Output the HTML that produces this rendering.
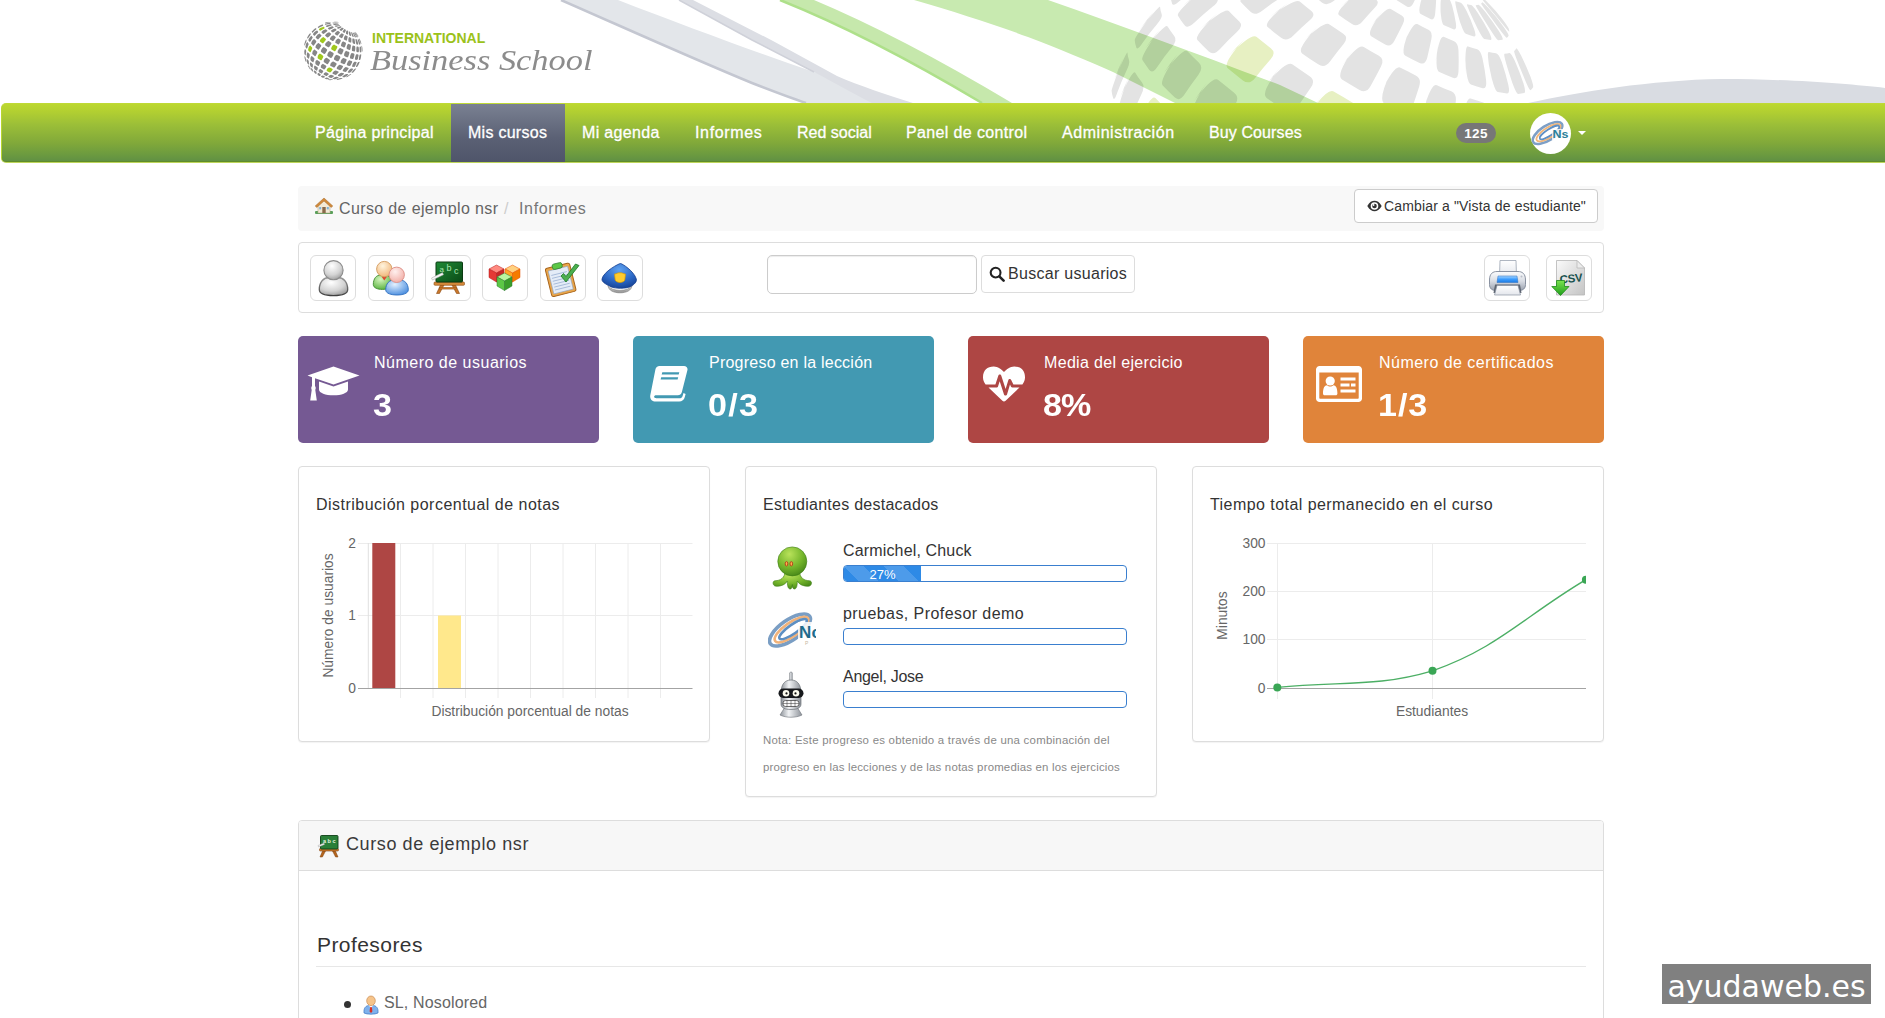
<!DOCTYPE html>
<html lang="es">
<head>
<meta charset="utf-8">
<title>Informes - Curso de ejemplo nsr</title>
<style>
*{box-sizing:border-box}
html,body{margin:0;padding:0}
body{width:1885px;height:1018px;overflow:hidden;background:#fff;position:relative;font-family:"Liberation Sans",sans-serif;font-size:16px;color:#333;letter-spacing:.4px}
.abs{position:absolute}
#hdr{left:0;top:0;width:1885px;height:103px;overflow:hidden}
#logo-int{left:372px;top:30px;font:bold 14px "Liberation Sans",sans-serif;color:#9bc21a;letter-spacing:0;line-height:16px;white-space:nowrap}
#logo-bs{left:370px;top:42px;font:italic 30px "Liberation Serif",serif;color:#8c8c8c;transform:scaleX(1.146);transform-origin:0 0;letter-spacing:0;line-height:36px;white-space:nowrap}
#nav{left:1px;top:103px;width:1890px;height:60px;border-radius:5px 0 0 5px;background:linear-gradient(#bcd82f 0%,#b3d031 12%,#9cbf38 35%,#80a83a 68%,#6e9c3f 85%,#5f8f44 100%);border:1px solid #b9d532;border-top-color:#bfd936;border-bottom-color:#bdd55a;box-shadow:inset 0 -1px 0 #5f8c2a}
.ni{position:absolute;top:0px;height:58px;line-height:57px;color:#fff;font-size:16px;white-space:nowrap;text-shadow:0 1px 0 rgba(0,0,0,.08);-webkit-text-stroke:.3px #fff}
#act{left:449px;top:0px;width:114px;height:58px;background:linear-gradient(#7a8192,#5a6074 60%,#4f556a)}
#badge{left:1456px;top:123px;width:40px;height:20px;border-radius:10px;background:#777;color:#fff;font-weight:bold;font-size:13.5px;line-height:21px;text-align:center;letter-spacing:.3px}
#avatar{left:1530px;top:113px;width:41px;height:41px;border-radius:50%;background:#fff;overflow:hidden}
#caret{left:1578px;top:131px;width:0;height:0;border-left:4.5px solid transparent;border-right:4.5px solid transparent;border-top:4.5px solid #fff}
#bc{left:298px;top:186px;width:1306px;height:45px;background:#f8f8f8;border-radius:4px}
#bc span{position:absolute;top:0;line-height:45px;white-space:nowrap}
#vbtn{left:1354px;top:189px;width:244px;height:34px;border:1px solid #ccc;border-radius:4px;background:#fff;font-size:14px;line-height:32px;color:#333;white-space:nowrap;letter-spacing:.1px}
#tb{left:298px;top:242px;width:1306px;height:71px;border:1px solid #ddd;border-radius:4px;background:#fff}
.ib{position:absolute;top:255px;width:46px;height:46px;border:1px solid #ddd;border-radius:6px;background:#fff}
.ib svg{position:absolute;left:0;top:0}
#sin{left:767px;top:255px;width:210px;height:39px;border:1px solid #ccc;border-radius:5px;background:#fff;box-shadow:inset 0 1px 1px rgba(0,0,0,.075)}
#sbtn{left:981px;top:255px;width:154px;height:38px;border:1px solid #ddd;border-radius:4px;background:#fff;line-height:36px;white-space:nowrap;letter-spacing:.3px}
.card{position:absolute;top:336px;width:301px;height:107px;border-radius:5px;color:#fff}
.card .t{position:absolute;left:76px;top:15px;font-size:16px;line-height:24px;white-space:nowrap;letter-spacing:.45px}
.card .v{position:absolute;left:75px;top:49.5px;font-size:31px;font-weight:bold;line-height:40px;white-space:nowrap;letter-spacing:1.2px;transform:scaleX(1.1);transform-origin:0 0}
.card svg{position:absolute}
.pan{position:absolute;border:1px solid #ddd;border-radius:4px;background:#fff;box-shadow:0 1px 1px rgba(0,0,0,.05)}
.pt{position:absolute;left:17px;top:26px;font-size:16px;line-height:24px;color:#333;white-space:nowrap;letter-spacing:.47px}
.pan svg{position:absolute;left:0;top:0}
svg text{font-family:"Liberation Sans",sans-serif;letter-spacing:0}
.sn{position:absolute;left:97px;font-size:16px;line-height:22px;color:#333;white-space:nowrap}
.pb{position:absolute;left:97px;width:284px;height:17px;border:1.5px solid #3a7fcf;border-radius:4px;background:#fff;overflow:hidden}
.pbf{position:absolute;left:0;top:0;height:100%;width:27.3%;background-color:#2e8ae6;background-image:linear-gradient(45deg,rgba(255,255,255,.15) 25%,transparent 25%,transparent 50%,rgba(255,255,255,.15) 50%,rgba(255,255,255,.15) 75%,transparent 75%,transparent);background-size:40px 40px;color:#fff;font-size:13px;line-height:17px;text-align:center;letter-spacing:0}
#note{position:absolute;left:17px;top:260px;font-size:11.43px;line-height:27.2px;color:#888;white-space:nowrap;letter-spacing:.45px}
#bp{left:298px;top:820px;width:1306px;height:230px;border:1px solid #ddd;border-radius:4px;background:#fff}
#bph{position:absolute;left:0;top:0;width:100%;height:50px;background:#f7f7f7;border-bottom:1px solid #ddd;border-radius:3px 3px 0 0}
#wm{left:1662px;top:964px;width:209px;height:40px;background:#808080;color:#fff;font:30px "DejaVu Sans",sans-serif;line-height:45px;overflow:hidden;text-align:center;letter-spacing:0;white-space:nowrap}
.f1{letter-spacing:0.311px!important}
.f2{letter-spacing:0.273px!important}
.f3{letter-spacing:0.344px!important}
.f4{letter-spacing:0.643px!important}
.f5{letter-spacing:0.003px!important}
.f6{letter-spacing:0.364px!important}
.f7{letter-spacing:0.546px!important}
.f8{letter-spacing:0.106px!important}
.f9{letter-spacing:0.365px!important}
.f10{letter-spacing:0.643px!important}
.f11{letter-spacing:0.153px!important}
.f12{letter-spacing:0.290px!important}
.f13{letter-spacing:0.500px!important}
.f14{letter-spacing:-0.975px!important}
.f15{letter-spacing:0.231px!important}
.f16{letter-spacing:1.193px!important}
.f17{letter-spacing:0.333px!important}
.f18{letter-spacing:-0.897px!important}
.f19{letter-spacing:0.474px!important}
.f20{letter-spacing:0.860px!important}
.f21{letter-spacing:0.485px!important}
.f22{letter-spacing:0.258px!important}
.f23{letter-spacing:0.155px!important}
.f24{letter-spacing:0.429px!important}
.f25{letter-spacing:-0.295px!important}
.f26{letter-spacing:0.244px!important}
.f27{letter-spacing:0.189px!important}
.f28{letter-spacing:0.442px!important}
.f29{letter-spacing:0.595px!important}
.f30{letter-spacing:0.432px!important}
.f31{letter-spacing:0.140px!important}
</style>
</head>
<body>
<div id="hdr" class="abs">
<svg class="abs" style="left:0;top:0" width="1885" height="103" viewBox="0 0 1885 103">
<defs>
<clipPath id="hc"><rect x="0" y="0" width="1885" height="103"/></clipPath>
<linearGradient id="fadeL" x1="0" x2="1" y1="0" y2="0"><stop offset="0" stop-color="#fff" stop-opacity="1"/><stop offset="1" stop-color="#fff" stop-opacity="0"/></linearGradient>
</defs>
<g clip-path="url(#hc)">
<!-- big globe tiles -->
<g id="bigglobe">
<path d="M1111.6,90.8L1112.1,94.3L1113.2,98.1Q1114.4,101.3 1117.2,92.7L1121.4,82.0L1126.1,71.5Q1130.2,63.4 1129.0,60.1L1127.9,56.2L1127.4,52.6Q1127.3,50.0 1114.4,79.6L1118.5,68.8L1123.2,58.2Q1111.6,88.2 1111.6,90.8Z" fill="#e3e3e3"/>
<path d="M1119.2,110.2L1122.3,115.0L1125.9,120.0Q1129.2,124.0 1132.1,115.7L1136.4,105.2L1141.2,94.8Q1145.3,86.7 1142.0,82.6L1138.3,77.5L1135.1,72.6Q1132.9,68.9 1119.9,98.2L1124.1,87.5L1128.8,77.0Q1117.1,106.7 1119.2,110.2Z" fill="#e3e3e3"/>
<path d="M1139.0,135.1L1144.5,140.8L1150.5,146.6Q1155.6,151.3 1158.7,143.2L1163.2,132.9L1168.2,122.7Q1172.4,114.7 1167.3,109.9L1161.1,103.9L1155.4,98.1Q1151.3,93.6 1138.0,122.5L1142.3,112.0L1147.1,101.7Q1135.0,130.8 1139.0,135.1Z" fill="#e7f0c2"/>
<path d="M1134.7,40.0L1135.2,43.6L1136.3,47.5Q1137.5,50.8 1142.5,43.1L1149.4,33.6L1156.8,24.4Q1162.9,17.5 1161.7,14.3L1160.6,10.5L1160.1,7.0Q1160.1,4.4 1139.7,29.7L1146.6,20.3L1154.0,11.3Q1134.6,37.4 1134.7,40.0Z" fill="#e3e3e3"/>
<path d="M1142.4,60.0L1145.6,64.8L1149.3,70.0Q1152.7,74.1 1157.6,66.4L1164.4,56.7L1171.7,47.4Q1177.7,40.2 1174.4,36.2L1170.8,31.2L1167.6,26.4Q1165.6,22.9 1145.2,48.6L1152.1,39.1L1159.4,29.9Q1140.2,56.3 1142.4,60.0Z" fill="#e3e3e3"/>
<path d="M1162.7,85.5L1168.4,91.3L1174.6,97.3Q1179.7,102.1 1184.6,94.3L1191.3,84.5L1198.3,74.9Q1204.0,67.5 1199.0,62.8L1193.0,57.0L1187.5,51.3Q1183.5,47.0 1163.6,73.3L1170.3,63.6L1177.5,54.2Q1158.6,81.0 1162.7,85.5Z" fill="#e3e3e3"/>
<path d="M1194.3,114.8L1202.1,121.2L1210.2,127.6Q1216.9,132.7 1221.7,124.8L1228.1,114.8L1234.8,105.0Q1240.2,97.3 1233.8,92.4L1225.8,86.1L1218.3,79.9Q1212.6,75.1 1193.4,102.0L1200.0,92.2L1206.9,82.5Q1188.5,109.8 1194.3,114.8Z" fill="#e3e3e3"/>
<path d="M1235.0,145.9L1244.3,152.4L1253.9,158.9Q1261.6,163.9 1266.3,156.0L1272.5,145.8L1278.8,135.7Q1283.8,127.7 1276.3,122.8L1267.0,116.5L1257.9,110.2Q1251.0,105.3 1232.7,132.9L1239.0,122.9L1245.6,113.0Q1227.9,140.8 1235.0,145.9Z" fill="#e3e3e3"/>
<path d="M1170.6,-3.4L1171.1,0.0L1172.1,3.8Q1173.3,6.9 1180.2,0.6L1189.3,-7.1L1198.9,-14.2Q1206.6,-19.5 1205.5,-22.4L1204.5,-25.8L1204.1,-29.0Q1204.1,-31.3 1177.5,-12.0L1186.7,-19.4L1196.3,-26.3Q1170.6,-5.9 1170.6,-3.4Z" fill="#e3e3e3"/>
<path d="M1178.0,15.7L1181.0,20.4L1184.6,25.2Q1187.8,29.2 1194.5,22.6L1203.3,14.5L1212.5,6.8Q1220.0,1.1 1217.0,-2.6L1213.7,-7.1L1210.9,-11.4Q1209.0,-14.7 1182.8,5.8L1191.8,-1.9L1201.3,-9.2Q1175.9,12.2 1178.0,15.7Z" fill="#e3e3e3"/>
<path d="M1197.4,40.1L1202.9,45.7L1208.8,51.4Q1213.7,56.0 1220.0,49.0L1228.3,40.3L1236.9,32.0Q1243.8,25.7 1239.3,21.5L1233.9,16.2L1228.8,11.1Q1225.2,7.2 1200.1,29.1L1208.8,20.9L1217.9,13.0Q1193.5,35.8 1197.4,40.1Z" fill="#e3e3e3"/>
<path d="M1227.7,68.2L1235.1,74.2L1242.9,80.4Q1249.3,85.3 1255.1,77.9L1262.7,68.6L1270.4,59.6Q1276.6,52.8 1270.8,48.3L1263.6,42.6L1256.7,37.0Q1251.6,32.6 1228.3,56.3L1236.4,47.5L1244.8,39.0Q1222.1,63.4 1227.7,68.2Z" fill="#e7f0c2"/>
<path d="M1266.6,97.9L1275.5,104.2L1284.7,110.3Q1292.0,115.1 1297.3,107.3L1304.0,97.5L1310.7,87.8Q1316.1,80.3 1309.3,75.9L1300.9,70.2L1292.6,64.5Q1286.4,60.0 1265.5,85.6L1272.8,76.2L1280.4,67.0Q1259.8,93.1 1266.6,97.9Z" fill="#e3e3e3"/>
<path d="M1311.6,127.5L1321.4,133.3L1331.3,139.1Q1339.1,143.6 1343.7,135.4L1349.4,124.9L1355.1,114.6Q1359.5,106.5 1352.3,102.4L1343.2,97.1L1334.1,91.7Q1327.1,87.3 1309.0,114.8L1315.5,104.8L1322.0,95.0Q1304.0,122.8 1311.6,127.5Z" fill="#e7f0c2"/>
<path d="M1223.5,-19.6L1226.2,-15.4L1229.4,-11.1Q1232.2,-7.6 1240.2,-12.6L1250.4,-18.6L1260.9,-24.1Q1269.3,-28.1 1266.9,-31.1L1264.2,-34.9L1261.8,-38.4Q1260.3,-41.1 1229.9,-27.3L1240.6,-32.7L1251.5,-37.6Q1221.7,-22.7 1223.5,-19.6Z" fill="#e7f0c2"/>
<path d="M1240.8,2.1L1245.6,7.0L1250.8,12.1Q1255.2,16.1 1262.5,10.4L1271.9,3.6L1281.5,-2.9Q1289.1,-7.7 1285.3,-11.2L1280.8,-15.5L1276.7,-19.8Q1273.7,-23.1 1245.1,-6.9L1255.2,-13.1L1265.5,-18.9Q1237.3,-1.7 1240.8,2.1Z" fill="#e3e3e3"/>
<path d="M1267.6,26.9L1274.2,32.4L1281.1,37.8Q1286.7,42.1 1293.1,35.7L1301.4,27.8L1309.7,20.3Q1316.2,14.7 1311.4,11.0L1305.5,6.3L1299.8,1.6Q1295.5,-2.0 1269.7,16.9L1278.9,9.7L1288.2,3.0Q1262.7,22.7 1267.6,26.9Z" fill="#e3e3e3"/>
<path d="M1302.1,53.4L1310.0,58.9L1318.2,64.3Q1324.7,68.6 1330.0,61.5L1336.8,52.6L1343.6,44.0Q1348.9,37.5 1343.3,33.8L1336.3,29.1L1329.5,24.4Q1324.3,20.6 1302.2,42.4L1310.1,34.3L1318.0,26.5Q1296.1,49.0 1302.1,53.4Z" fill="#e3e3e3"/>
<path d="M1342.0,79.5L1350.7,84.8L1359.5,89.9Q1366.4,93.8 1370.6,86.0L1375.9,76.2L1381.0,66.6Q1384.9,59.2 1378.9,55.8L1371.3,51.4L1363.8,46.9Q1358.0,43.3 1340.3,68.0L1346.8,58.9L1353.1,50.1Q1335.3,75.4 1342.0,79.5Z" fill="#e3e3e3"/>
<path d="M1384.5,103.7L1393.4,108.3L1402.3,112.7Q1409.2,116.0 1412.2,107.6L1415.8,96.9L1419.2,86.4Q1421.7,78.3 1415.7,75.4L1408.1,71.6L1400.5,67.7Q1394.4,64.5 1381.5,91.9L1386.3,81.9L1390.9,72.1Q1377.6,99.9 1384.5,103.7Z" fill="#e3e3e3"/>
<path d="M1426.8,124.1L1435.3,127.7L1443.6,131.2Q1450.0,133.7 1451.9,124.7L1454.0,113.4L1455.7,102.2Q1456.8,93.5 1451.3,91.3L1444.1,88.4L1436.9,85.3Q1431.1,82.7 1422.8,112.5L1426.0,101.7L1429.0,91.0Q1420.1,121.1 1426.8,124.1Z" fill="#e3e3e3"/>
<path d="M1466.0,139.5L1473.4,141.9L1480.6,144.1Q1486.1,145.6 1487.0,136.3L1487.7,124.6L1488.0,112.9Q1487.9,103.8 1483.2,102.5L1477.0,100.6L1470.6,98.5Q1465.4,96.7 1461.6,128.3L1463.3,116.9L1464.6,105.5Q1459.9,137.4 1466.0,139.5Z" fill="#e3e3e3"/>
<path d="M1499.3,148.7L1505.3,149.8L1510.9,150.6Q1515.0,151.0 1515.1,141.6L1514.8,129.6L1513.9,117.7Q1512.8,108.4 1509.2,108.1L1504.4,107.4L1499.3,106.5Q1495.0,105.6 1495.1,138.3L1495.5,126.5L1495.4,114.7Q1494.4,147.7 1499.3,148.7Z" fill="#e3e3e3"/>
<path d="M1524.6,151.2L1528.6,150.8L1532.2,150.2Q1534.8,149.5 1534.4,140.1L1533.3,128.2L1531.6,116.4Q1529.8,107.1 1527.6,107.7L1524.5,108.3L1521.0,108.6Q1518.0,108.7 1521.0,141.8L1520.5,129.9L1519.3,118.0Q1521.1,151.3 1524.6,151.2Z" fill="#e3e3e3"/>
<path d="M1540.0,146.8L1541.9,145.0L1543.3,142.9Q1544.1,141.1 1543.4,132.0L1542.0,120.4L1539.9,108.9Q1537.8,99.9 1537.1,101.5L1535.9,103.3L1534.3,104.8Q1532.8,105.8 1537.7,138.6L1536.5,126.8L1534.7,115.0Q1538.2,147.9 1540.0,146.8Z" fill="#e3e3e3"/>
<path d="M1311.4,-6.0L1316.7,-1.7L1322.2,2.7Q1326.7,6.2 1333.3,1.2L1341.6,-4.8L1349.9,-10.3Q1356.4,-14.3 1352.9,-17.0L1348.6,-20.4L1344.5,-23.7Q1341.4,-26.4 1314.9,-13.7L1324.4,-18.7L1333.9,-23.2Q1307.4,-9.4 1311.4,-6.0Z" fill="#e3e3e3"/>
<path d="M1339.1,15.2L1345.5,19.7L1352.0,24.1Q1357.2,27.5 1362.4,21.5L1368.8,14.2L1375.2,7.3Q1380.0,2.2 1376.0,-0.4L1370.9,-3.8L1366.0,-7.3Q1362.2,-10.0 1340.5,6.5L1348.3,0.2L1356.1,-5.7Q1334.3,11.8 1339.1,15.2Z" fill="#e3e3e3"/>
<path d="M1371.2,36.3L1378.2,40.5L1385.2,44.6Q1390.8,47.8 1394.4,40.8L1398.8,32.3L1402.9,24.1Q1406.0,17.9 1401.7,15.5L1396.2,12.3L1390.8,9.0Q1386.6,6.4 1370.5,26.7L1376.4,19.1L1382.2,11.8Q1365.8,32.9 1371.2,36.3Z" fill="#e3e3e3"/>
<path d="M1405.4,55.7L1412.5,59.4L1419.6,62.9Q1425.2,65.6 1427.2,57.8L1429.4,48.2L1431.4,38.9Q1432.7,31.7 1428.4,29.7L1422.9,26.9L1417.3,24.1Q1413.0,21.7 1403.0,45.5L1406.8,36.7L1410.3,28.2Q1399.8,52.7 1405.4,55.7Z" fill="#e3e3e3"/>
<path d="M1439.4,72.1L1446.2,75.0L1452.9,77.8Q1458.0,79.8 1458.5,71.4L1458.7,60.9L1458.5,50.6Q1458.1,42.8 1454.1,41.2L1448.9,39.1L1443.7,36.8Q1439.5,34.9 1435.5,61.7L1437.3,51.9L1438.6,42.2Q1434.0,69.7 1439.4,72.1Z" fill="#e3e3e3"/>
<path d="M1470.9,84.5L1476.9,86.4L1482.7,88.2Q1487.0,89.4 1486.1,80.5L1484.6,69.4L1482.5,58.5Q1480.6,50.2 1477.2,49.2L1472.7,47.9L1468.1,46.4Q1464.3,45.1 1466.1,74.2L1465.8,63.5L1465.1,53.1Q1466.0,82.8 1470.9,84.5Z" fill="#e3e3e3"/>
<path d="M1497.7,91.9L1502.5,92.8L1507.0,93.4Q1510.3,93.7 1508.3,84.7L1505.3,73.3L1501.8,62.1Q1498.6,53.5 1496.0,53.3L1492.5,52.8L1488.8,52.1Q1485.8,51.5 1492.5,82.1L1490.5,70.9L1488.0,59.9Q1493.7,91.1 1497.7,91.9Z" fill="#e3e3e3"/>
<path d="M1518.0,93.9L1521.3,93.6L1524.2,93.1Q1526.2,92.5 1523.5,83.5L1519.5,72.2L1514.9,61.1Q1510.9,52.6 1509.4,53.0L1507.1,53.4L1504.6,53.7Q1502.4,53.7 1513.0,84.9L1509.7,73.5L1505.8,62.3Q1515.2,94.0 1518.0,93.9Z" fill="#e3e3e3"/>
<path d="M1530.4,90.3L1531.9,88.9L1533.1,87.3Q1533.7,85.8 1530.6,77.1L1526.1,66.2L1521.1,55.6Q1516.7,47.4 1516.2,48.5L1515.4,49.8L1514.2,50.9Q1513.1,51.6 1526.1,82.3L1522.0,71.1L1517.2,60.1Q1529.0,91.3 1530.4,90.3Z" fill="#e3e3e3"/>
<path d="M1375.1,-13.8L1379.5,-10.8L1384.0,-7.8Q1387.6,-5.4 1392.1,-9.8L1397.8,-15.0L1403.2,-19.8Q1407.3,-23.1 1405.1,-24.6L1402.3,-26.5L1399.6,-28.3Q1397.5,-29.8 1377.6,-19.8L1384.9,-23.8L1392.1,-27.4Q1371.7,-16.2 1375.1,-13.8Z" fill="#e3e3e3"/>
<path d="M1397.2,0.6L1402.0,3.5L1406.8,6.4Q1410.7,8.5 1413.4,3.0L1416.6,-3.7L1419.5,-9.9Q1421.6,-14.5 1419.3,-15.8L1416.2,-17.6L1413.3,-19.4Q1411.0,-20.8 1397.5,-6.4L1402.6,-12.0L1407.4,-17.1Q1393.4,-1.7 1397.2,0.6Z" fill="#e3e3e3"/>
<path d="M1420.7,14.0L1425.6,16.5L1430.5,19.0Q1434.3,20.8 1435.1,14.3L1435.8,6.3L1436.2,-1.3Q1436.3,-6.9 1433.9,-8.0L1430.9,-9.5L1427.8,-11.1Q1425.4,-12.4 1419.0,6.1L1421.6,-0.9L1423.9,-7.5Q1416.8,11.9 1420.7,14.0Z" fill="#e3e3e3"/>
<path d="M1444.1,25.3L1448.8,27.3L1453.4,29.2Q1456.9,30.6 1455.9,23.3L1454.2,14.3L1452.1,5.6Q1450.3,-0.8 1448.1,-1.7L1445.2,-2.9L1442.3,-4.1Q1440.0,-5.1 1440.7,16.9L1440.7,8.6L1440.5,0.7Q1440.4,23.6 1444.1,25.3Z" fill="#e3e3e3"/>
<path d="M1465.8,33.8L1469.9,35.2L1473.9,36.4Q1476.9,37.2 1474.2,29.3L1470.5,19.6L1466.2,10.3Q1462.6,3.3 1460.8,2.7L1458.3,2.0L1455.7,1.2Q1453.7,0.4 1460.9,25.1L1458.7,15.9L1456.0,7.1Q1462.4,32.6 1465.8,33.8Z" fill="#e3e3e3"/>
<path d="M1484.2,38.9L1487.5,39.5L1490.6,40.0Q1492.9,40.2 1489.0,32.1L1483.5,22.1L1477.5,12.4Q1472.5,5.1 1471.1,5.0L1469.2,4.7L1467.2,4.3Q1465.5,4.0 1478.5,30.4L1474.2,20.6L1469.5,11.1Q1481.5,38.3 1484.2,38.9Z" fill="#e3e3e3"/>
<path d="M1498.2,40.3L1500.5,40.1L1502.5,39.7Q1503.9,39.3 1499.0,31.3L1492.4,21.4L1485.2,11.8Q1479.3,4.6 1478.4,4.8L1477.2,5.0L1475.8,5.2Q1474.6,5.2 1492.0,32.2L1486.2,22.2L1479.9,12.5Q1496.3,40.3 1498.2,40.3Z" fill="#e3e3e3"/>
<path d="M1506.8,37.8L1507.8,36.9L1508.6,35.7Q1509.0,34.7 1503.7,27.1L1496.6,17.6L1488.9,8.6Q1482.5,1.7 1482.2,2.3L1481.8,3.0L1481.1,3.6Q1480.5,4.1 1500.8,30.5L1493.9,20.7L1486.6,11.2Q1505.8,38.5 1506.8,37.8Z" fill="#e3e3e3"/>
<path d="M1509.3,31.7L1509.1,30.0L1508.6,28.2Q1508.0,26.7 1502.8,19.7L1495.7,11.1L1488.2,2.9Q1481.9,-3.3 1482.2,-2.3L1482.5,-1.2L1482.7,-0.1Q1482.7,0.6 1504.0,25.4L1496.8,16.2L1489.1,7.3Q1509.3,33.0 1509.3,31.7Z" fill="#e3e3e3"/>
</g>
<!-- gray hill right -->
<path d="M1528,103 C1580,92 1650,80 1722,79 C1790,79 1850,84 1885,88 L1885,103 Z" fill="#d9dce2"/>
<!-- gray bands -->
<path d="M561,0 C625,28 689,57 752,83 C770,90 788,97 805,103 L911,103 C893,98 875,93 858,87 L814,72 C750,50 688,27 618,0 Z" fill="#e3e6ea"/>
<path d="M561,0 C625,28 689,57 752,83 C770,90 788,97 806,103" fill="none" stroke="#c4c7d1" stroke-width="2.5"/>
<path d="M679,0 L752,40 L814,72 C835,83 850,92 872,103 L913,103 C885,94 860,86 837,76 L773,41 L693,0 Z" fill="#dcdee4"/>
<path d="M679,0 L752,40 L814,72" fill="none" stroke="#cfd1d9" stroke-width="1.5"/>
<!-- thin green band -->
<path d="M780,0 Q870,36 982,103 L1012,103 Q900,36 814,0 Z" fill="#c6e8ac"/>
<path d="M780,0 Q870,36 982,103" fill="none" stroke="#aee08a" stroke-width="2.5"/>
<!-- wide green band -->
<path d="M914,0 C955,12 990,23 1028,37 C1060,49 1088,61 1113,72 L1175,103 L1318,103 L1280,85 C1200,55 1120,25 1048,0 Z" fill="#c8eab0" style="mix-blend-mode:multiply"/>
</g>
</svg>
<svg class="abs" style="left:300px;top:18px" width="66" height="66" viewBox="300 18 66 66">
<path d="M309.7,68.9L310.1,69.3L310.5,69.7Q310.8,70.0 310.4,69.3L310.0,68.3L309.6,67.3Q309.4,66.5 308.9,66.1L308.4,65.6L307.9,65.1Q307.5,64.7 308.9,67.8L308.3,66.7L307.8,65.6Q309.4,68.6 309.7,68.9Z" fill="#868686"/>
<path d="M311.9,70.9L312.4,71.3L312.9,71.8Q313.4,72.1 313.2,71.5L313.0,70.8L312.8,69.9Q312.7,69.2 312.2,68.8L311.4,68.2L310.8,67.7Q310.2,67.2 311.1,69.9L310.7,69.0L310.4,68.0Q311.5,70.6 311.9,70.9Z" fill="#868686"/>
<path d="M314.6,73.0L315.3,73.4L315.9,73.9Q316.4,74.2 316.4,73.8L316.5,73.2L316.6,72.5Q316.7,72.0 316.1,71.5L315.2,71.0L314.4,70.4Q313.8,70.0 314.0,72.1L313.9,71.4L313.8,70.6Q314.2,72.7 314.6,73.0Z" fill="#868686"/>
<path d="M317.8,75.1L318.5,75.5L319.2,75.9Q319.8,76.2 320.0,75.9L320.4,75.5L320.8,75.0Q321.1,74.6 320.4,74.2L319.5,73.6L318.6,73.1Q317.9,72.7 317.4,74.4L317.5,73.8L317.7,73.2Q317.3,74.8 317.8,75.1Z" fill="#868686"/>
<path d="M321.2,77.0L321.9,77.3L322.6,77.7Q323.1,77.9 323.6,77.8L324.3,77.5L325.0,77.1Q325.5,76.8 324.8,76.5L323.9,76.0L323.0,75.6Q322.3,75.2 321.0,76.4L321.4,76.1L321.9,75.6Q320.7,76.7 321.2,77.0Z" fill="#868686"/>
<path d="M324.6,78.6L325.2,78.8L325.9,79.1Q326.3,79.3 327.1,79.2L328.0,79.1L329.0,78.8Q329.7,78.6 329.1,78.4L328.2,78.0L327.4,77.7Q326.7,77.4 324.6,78.2L325.3,78.0L326.1,77.7Q324.0,78.3 324.6,78.6Z" fill="#868686"/>
<path d="M327.6,79.7L328.2,79.9L328.7,80.1Q329.2,80.2 330.1,80.2L331.3,80.1L332.5,80.0Q333.4,79.8 332.9,79.6L332.1,79.4L331.4,79.2Q330.8,79.0 327.9,79.5L329.0,79.4L330.0,79.2Q327.2,79.6 327.6,79.7Z" fill="#868686"/>
<path d="M305.4,61.0L305.7,61.5L306.1,62.0Q306.4,62.4 306.2,61.4L306.0,60.0L305.8,58.7Q305.7,57.6 305.4,57.2L304.9,56.6L304.5,56.1Q304.3,55.6 304.9,59.6L304.6,58.2L304.4,56.8Q305.2,60.7 305.4,61.0Z" fill="#868686"/>
<path d="M307.4,63.5L308.0,64.0L308.6,64.6Q309.1,65.1 309.0,64.2L308.9,63.0L308.8,61.8Q308.9,60.8 308.3,60.3L307.6,59.6L306.9,59.0Q306.5,58.5 306.8,62.1L306.6,60.8L306.5,59.5Q307.0,63.1 307.4,63.5Z" fill="#868686"/>
<path d="M310.5,66.3L311.3,66.9L312.1,67.5Q312.7,68.0 312.7,67.2L312.8,66.2L312.9,65.1Q313.1,64.2 312.3,63.7L311.4,62.9L310.6,62.2Q309.9,61.7 309.9,65.0L309.8,63.8L309.8,62.6Q310.0,65.8 310.5,66.3Z" fill="#868686"/>
<path d="M314.5,69.3L315.4,69.9L316.3,70.5Q317.0,70.9 317.2,70.3L317.5,69.4L317.8,68.5Q318.1,67.7 317.3,67.1L316.2,66.4L315.2,65.7Q314.4,65.2 313.9,68.0L314.0,67.0L314.2,66.0Q313.8,68.8 314.5,69.3Z" fill="#868686"/>
<path d="M319.0,72.2L320.0,72.7L320.9,73.3Q321.7,73.7 322.1,73.2L322.6,72.4L323.2,71.6Q323.6,71.0 322.7,70.5L321.6,69.8L320.4,69.1Q319.6,68.6 318.5,71.1L318.8,70.2L319.2,69.3Q318.2,71.7 319.0,72.2Z" fill="#868686"/>
<path d="M323.8,74.8L324.7,75.3L325.7,75.8Q326.5,76.2 327.1,75.7L327.8,75.1L328.6,74.4Q329.2,73.8 328.3,73.4L327.2,72.8L326.0,72.3Q325.1,71.8 323.4,73.9L324.0,73.2L324.6,72.4Q323.0,74.4 323.8,74.8Z" fill="#868686"/>
<path d="M328.5,77.1L329.4,77.5L330.3,77.8Q331.0,78.1 331.8,77.7L332.8,77.2L333.7,76.6Q334.5,76.1 333.7,75.8L332.6,75.3L331.6,74.9Q330.7,74.5 328.4,76.3L329.2,75.7L330.0,75.1Q327.7,76.8 328.5,77.1Z" fill="#868686"/>
<path d="M332.8,78.7L333.6,79.0L334.4,79.2Q335.0,79.4 335.9,79.1L337.1,78.6L338.3,78.0Q339.2,77.6 338.5,77.4L337.6,77.1L336.6,76.8Q335.9,76.6 333.0,78.2L334.0,77.7L335.0,77.1Q332.2,78.5 332.8,78.7Z" fill="#868686"/>
<path d="M336.5,79.7L337.1,79.8L337.7,79.9Q338.1,79.9 339.2,79.6L340.5,79.2L341.9,78.7Q342.9,78.2 342.4,78.1L341.7,78.1L340.9,77.9Q340.3,77.8 336.9,79.3L338.1,78.8L339.3,78.3Q335.9,79.6 336.5,79.7Z" fill="#868686"/>
<path d="M304.5,54.2L304.9,54.7L305.3,55.3Q305.7,55.8 305.8,54.7L305.9,53.3L306.2,51.9Q306.4,50.8 306.0,50.3L305.5,49.6L305.0,49.0Q304.7,48.5 304.2,52.6L304.3,51.1L304.5,49.7Q304.2,53.7 304.5,54.2Z" fill="#868686"/>
<path d="M307.0,57.2L307.7,57.9L308.4,58.6Q309.0,59.1 309.1,58.1L309.4,56.8L309.7,55.5Q310.0,54.4 309.3,53.8L308.5,53.0L307.8,52.3Q307.2,51.7 306.6,55.6L306.7,54.2L307.0,52.8Q306.5,56.7 307.0,57.2Z" fill="#868686"/>
<path d="M310.8,60.6L311.7,61.4L312.6,62.1Q313.4,62.7 313.6,61.8L314.0,60.5L314.4,59.3Q314.8,58.3 313.9,57.7L312.9,56.9L311.9,56.1Q311.1,55.4 310.2,59.1L310.5,57.8L310.8,56.5Q310.1,60.1 310.8,60.6Z" fill="#868686"/>
<path d="M315.6,64.3L316.7,65.0L317.8,65.7Q318.7,66.3 319.0,65.5L319.5,64.3L320.1,63.2Q320.5,62.3 319.5,61.6L318.3,60.8L317.1,60.0Q316.2,59.4 315.0,62.8L315.4,61.6L315.9,60.4Q314.8,63.7 315.6,64.3Z" fill="#868686"/>
<path d="M321.1,67.8L322.3,68.5L323.5,69.2Q324.4,69.7 324.9,69.0L325.6,67.9L326.2,66.9Q326.8,66.0 325.8,65.4L324.5,64.7L323.2,63.9Q322.2,63.3 320.6,66.4L321.1,65.3L321.7,64.2Q320.2,67.3 321.1,67.8Z" fill="#868686"/>
<path d="M326.9,71.1L328.1,71.7L329.3,72.3Q330.3,72.7 330.9,72.0L331.7,71.1L332.5,70.1Q333.2,69.3 332.1,68.8L330.8,68.1L329.5,67.5Q328.5,66.9 326.5,69.8L327.2,68.8L327.9,67.8Q326.0,70.6 326.9,71.1Z" fill="#a0c81e"/>
<path d="M332.7,73.8L333.8,74.3L335.0,74.8Q335.8,75.1 336.6,74.4L337.5,73.6L338.5,72.6Q339.2,71.8 338.3,71.5L337.1,71.0L335.8,70.5Q334.8,70.0 332.5,72.7L333.3,71.8L334.2,70.8Q331.8,73.4 332.7,73.8Z" fill="#868686"/>
<path d="M338.0,75.9L339.0,76.2L340.0,76.4Q340.7,76.6 341.6,76.0L342.6,75.2L343.7,74.3Q344.5,73.5 343.7,73.3L342.7,73.0L341.6,72.7Q340.7,72.4 338.0,75.0L339.0,74.1L340.0,73.2Q337.2,75.6 338.0,75.9Z" fill="#868686"/>
<path d="M342.5,77.0L343.3,77.2L344.0,77.2Q344.5,77.3 345.5,76.7L346.7,75.9L347.8,75.0Q348.7,74.2 348.1,74.2L347.3,74.1L346.5,74.0Q345.8,73.8 342.7,76.3L343.9,75.5L344.9,74.6Q341.8,76.9 342.5,77.0Z" fill="#868686"/>
<path d="M345.8,77.3L346.3,77.2L346.8,77.1Q347.1,77.0 348.1,76.4L349.4,75.6L350.6,74.7Q351.5,73.9 351.2,74.0L350.7,74.1L350.1,74.2Q349.6,74.2 346.4,76.7L347.6,75.9L348.7,75.0Q345.4,77.3 345.8,77.3Z" fill="#868686"/>
<path d="M304.3,44.5L304.4,44.9L304.6,45.4Q304.8,45.9 305.1,44.7L305.6,43.3L306.2,41.9Q306.7,40.8 306.5,40.4L306.3,39.8L306.2,39.4Q306.2,39.0 304.6,43.0L305.1,41.5L305.7,40.1Q304.3,44.1 304.3,44.5Z" fill="#868686"/>
<path d="M305.5,47.1L305.9,47.8L306.4,48.4Q306.9,49.0 307.3,47.9L307.8,46.5L308.4,45.1Q308.9,44.0 308.4,43.4L307.9,42.8L307.4,42.1Q307.1,41.6 305.5,45.5L306.0,44.1L306.6,42.7Q305.2,46.6 305.5,47.1Z" fill="#868686"/>
<path d="M308.3,50.5L309.0,51.2L309.9,52.0Q310.5,52.6 310.9,51.6L311.5,50.2L312.1,48.8Q312.6,47.8 311.9,47.2L311.1,46.4L310.3,45.6Q309.7,45.0 308.1,48.8L308.6,47.4L309.2,46.1Q307.7,49.9 308.3,50.5Z" fill="#a0c81e"/>
<path d="M312.5,54.3L313.5,55.1L314.6,56.0Q315.4,56.6 315.9,55.6L316.5,54.3L317.2,52.9Q317.7,51.9 316.8,51.2L315.7,50.4L314.7,49.5Q313.9,48.9 312.2,52.6L312.7,51.3L313.3,49.9Q311.7,53.7 312.5,54.3Z" fill="#868686"/>
<path d="M317.9,58.4L319.1,59.2L320.3,60.0Q321.3,60.6 321.8,59.7L322.5,58.4L323.2,57.1Q323.8,56.1 322.7,55.4L321.5,54.6L320.2,53.7Q319.3,53.0 317.4,56.7L318.0,55.4L318.7,54.1Q317.0,57.7 317.9,58.4Z" fill="#a0c81e"/>
<path d="M324.0,62.3L325.3,63.1L326.7,63.9Q327.7,64.5 328.3,63.5L329.0,62.3L329.8,61.0Q330.4,60.0 329.3,59.4L327.9,58.6L326.6,57.8Q325.5,57.2 323.5,60.7L324.2,59.5L324.9,58.2Q323.0,61.7 324.0,62.3Z" fill="#868686"/>
<path d="M330.5,66.0L331.9,66.6L333.2,67.3Q334.2,67.8 334.9,66.9L335.7,65.7L336.5,64.4Q337.1,63.4 336.0,62.9L334.7,62.3L333.3,61.6Q332.2,61.0 330.1,64.5L330.8,63.3L331.6,62.0Q329.5,65.4 330.5,66.0Z" fill="#868686"/>
<path d="M337.0,69.0L338.2,69.6L339.5,70.1Q340.4,70.4 341.1,69.5L342.0,68.4L342.8,67.1Q343.5,66.2 342.5,65.8L341.2,65.3L339.9,64.7Q338.9,64.3 336.6,67.7L337.4,66.5L338.2,65.3Q336.0,68.6 337.0,69.0Z" fill="#868686"/>
<path d="M342.9,71.3L344.0,71.6L345.0,71.9Q345.8,72.2 346.6,71.3L347.5,70.1L348.4,68.9Q349.1,67.9 348.2,67.7L347.1,67.4L346.0,67.0Q345.1,66.7 342.7,70.1L343.6,68.9L344.4,67.7Q342.0,71.0 342.9,71.3Z" fill="#868686"/>
<path d="M347.8,72.6L348.7,72.7L349.5,72.8Q350.1,72.9 350.9,72.0L351.9,70.9L352.8,69.7Q353.5,68.7 352.9,68.7L352.0,68.5L351.1,68.4Q350.4,68.3 347.9,71.6L348.8,70.4L349.7,69.2Q347.1,72.5 347.8,72.6Z" fill="#868686"/>
<path d="M351.6,72.9L352.1,72.8L352.7,72.7Q353.0,72.6 353.9,71.7L354.9,70.5L355.8,69.3Q356.5,68.4 356.1,68.5L355.6,68.6L355.0,68.7Q354.5,68.7 351.9,72.0L352.9,70.9L353.8,69.7Q351.1,72.9 351.6,72.9Z" fill="#868686"/>
<path d="M307.2,37.6L307.3,38.1L307.5,38.6Q307.7,39.0 308.3,38.0L309.1,36.7L310.1,35.5Q310.9,34.5 310.7,34.1L310.5,33.6L310.4,33.1Q310.4,32.7 307.8,36.2L308.6,34.9L309.6,33.7Q307.1,37.2 307.2,37.6Z" fill="#868686"/>
<path d="M308.4,40.3L308.8,41.0L309.4,41.7Q309.8,42.2 310.5,41.2L311.3,39.9L312.2,38.6Q313.0,37.7 312.5,37.1L312.0,36.4L311.6,35.8Q311.3,35.3 308.7,38.8L309.6,37.5L310.5,36.3Q308.1,39.8 308.4,40.3Z" fill="#868686"/>
<path d="M311.3,43.8L312.1,44.6L312.9,45.4Q313.6,46.0 314.2,45.0L315.1,43.7L316.0,42.4Q316.7,41.4 316.0,40.8L315.2,40.0L314.4,39.2Q313.8,38.6 311.3,42.2L312.2,40.9L313.1,39.6Q310.7,43.2 311.3,43.8Z" fill="#868686"/>
<path d="M315.6,47.8L316.7,48.6L317.8,49.5Q318.7,50.1 319.3,49.1L320.1,47.8L321.0,46.5Q321.7,45.4 320.8,44.8L319.7,43.9L318.7,43.1Q317.9,42.5 315.5,46.1L316.3,44.8L317.2,43.5Q314.9,47.1 315.6,47.8Z" fill="#868686"/>
<path d="M321.2,52.0L322.4,52.8L323.7,53.7Q324.7,54.3 325.4,53.3L326.2,51.9L327.0,50.6Q327.6,49.5 326.6,48.9L325.4,48.1L324.1,47.2Q323.2,46.5 320.9,50.2L321.7,48.9L322.5,47.6Q320.2,51.3 321.2,52.0Z" fill="#868686"/>
<path d="M327.6,56.1L328.9,56.9L330.3,57.7Q331.4,58.3 332.0,57.2L332.8,55.9L333.5,54.5Q334.1,53.4 333.1,52.8L331.7,52.0L330.4,51.2Q329.3,50.6 327.1,54.4L327.9,53.0L328.7,51.7Q326.5,55.4 327.6,56.1Z" fill="#868686"/>
<path d="M334.3,59.8L335.7,60.5L337.0,61.2Q338.1,61.7 338.7,60.7L339.5,59.3L340.2,57.9Q340.8,56.8 339.7,56.3L338.4,55.6L337.0,54.9Q335.9,54.4 333.8,58.2L334.6,56.8L335.3,55.5Q333.2,59.3 334.3,59.8Z" fill="#868686"/>
<path d="M340.9,63.0L342.3,63.5L343.5,64.1Q344.5,64.4 345.1,63.4L345.8,62.0L346.5,60.6Q347.0,59.5 346.1,59.1L344.8,58.6L343.5,58.0Q342.5,57.6 340.5,61.5L341.2,60.1L342.0,58.7Q339.9,62.5 340.9,63.0Z" fill="#868686"/>
<path d="M347.1,65.3L348.2,65.7L349.3,66.0Q350.1,66.2 350.7,65.2L351.4,63.8L352.1,62.4Q352.5,61.2 351.7,61.0L350.6,60.7L349.5,60.3Q348.6,60.0 346.7,64.0L347.4,62.6L348.1,61.2Q346.1,65.0 347.1,65.3Z" fill="#868686"/>
<path d="M352.2,66.7L353.1,66.8L354.0,66.9Q354.6,67.0 355.2,65.9L355.8,64.5L356.5,63.1Q356.9,62.0 356.3,61.9L355.5,61.8L354.6,61.7Q353.8,61.5 352.0,65.5L352.7,64.1L353.4,62.7Q351.5,66.5 352.2,66.7Z" fill="#868686"/>
<path d="M356.1,67.0L356.7,66.9L357.2,66.8Q357.6,66.6 358.1,65.6L358.8,64.2L359.4,62.8Q359.8,61.6 359.5,61.7L358.9,61.9L358.4,61.9Q357.8,62.0 356.1,65.9L356.8,64.5L357.4,63.1Q355.5,67.0 356.1,67.0Z" fill="#868686"/>
<path d="M311.8,31.6L311.9,32.1L312.1,32.6Q312.2,33.0 313.1,32.2L314.3,31.1L315.5,30.1Q316.5,29.4 316.3,29.0L316.2,28.5L316.1,28.1Q316.1,27.7 312.6,30.4L313.8,29.4L315.1,28.4Q311.8,31.2 311.8,31.6Z" fill="#868686"/>
<path d="M313.0,34.3L313.4,34.9L313.9,35.6Q314.4,36.1 315.2,35.2L316.3,34.1L317.5,33.0Q318.5,32.2 318.1,31.7L317.6,31.1L317.2,30.5Q316.9,30.1 313.5,32.9L314.7,31.8L315.9,30.8Q312.7,33.8 313.0,34.3Z" fill="#868686"/>
<path d="M315.7,37.6L316.5,38.4L317.3,39.1Q318.0,39.8 318.8,38.8L319.9,37.6L321.0,36.5Q321.9,35.6 321.2,35.1L320.5,34.4L319.8,33.7Q319.3,33.1 316.0,36.1L317.2,35.0L318.3,33.9Q315.2,37.0 315.7,37.6Z" fill="#868686"/>
<path d="M320.0,41.4L321.0,42.3L322.0,43.1Q322.9,43.7 323.6,42.7L324.6,41.5L325.6,40.3Q326.4,39.3 325.6,38.7L324.6,38.0L323.7,37.2Q323.0,36.6 320.0,39.9L321.0,38.7L322.1,37.5Q319.2,40.8 320.0,41.4Z" fill="#a0c81e"/>
<path d="M325.3,45.5L326.5,46.3L327.8,47.1Q328.8,47.8 329.4,46.7L330.3,45.4L331.2,44.1Q331.9,43.1 331.0,42.5L329.8,41.7L328.7,41.0Q327.8,40.4 325.1,43.8L326.1,42.6L327.0,41.3Q324.4,44.8 325.3,45.5Z" fill="#868686"/>
<path d="M331.5,49.5L332.8,50.2L334.1,51.0Q335.1,51.6 335.7,50.5L336.5,49.1L337.2,47.7Q337.8,46.6 336.9,46.1L335.6,45.4L334.4,44.7Q333.4,44.1 331.1,47.8L331.9,46.4L332.8,45.1Q330.4,48.8 331.5,49.5Z" fill="#a0c81e"/>
<path d="M338.0,53.1L339.3,53.8L340.6,54.4Q341.7,54.9 342.2,53.8L342.8,52.3L343.4,50.9Q343.9,49.7 342.9,49.3L341.7,48.7L340.4,48.1Q339.5,47.5 337.5,51.4L338.2,50.0L338.9,48.6Q336.9,52.5 338.0,53.1Z" fill="#868686"/>
<path d="M344.4,56.1L345.6,56.7L346.9,57.2Q347.8,57.5 348.3,56.4L348.8,54.9L349.3,53.4Q349.6,52.2 348.7,51.8L347.6,51.4L346.4,50.9Q345.5,50.5 343.9,54.6L344.5,53.1L345.1,51.6Q343.4,55.7 344.4,56.1Z" fill="#868686"/>
<path d="M350.3,58.4L351.4,58.7L352.4,59.0Q353.3,59.3 353.6,58.1L354.1,56.6L354.4,55.0Q354.7,53.8 353.9,53.6L352.9,53.3L351.9,53.0Q351.1,52.7 349.8,56.9L350.3,55.4L350.8,53.9Q349.4,58.1 350.3,58.4Z" fill="#868686"/>
<path d="M355.3,59.7L356.1,59.8L356.9,59.9Q357.5,60.0 357.9,58.8L358.2,57.3L358.5,55.7Q358.7,54.5 358.1,54.4L357.3,54.3L356.5,54.2Q355.9,54.1 354.9,58.4L355.3,56.8L355.6,55.3Q354.5,59.6 355.3,59.7Z" fill="#868686"/>
<path d="M359.0,60.0L359.6,59.9L360.1,59.8Q360.4,59.7 360.7,58.5L361.0,56.9L361.2,55.4Q361.3,54.2 361.0,54.3L360.5,54.4L360.0,54.5Q359.5,54.5 358.8,58.8L359.1,57.3L359.4,55.7Q358.5,60.0 359.0,60.0Z" fill="#868686"/>
<path d="M317.8,27.0L317.9,27.4L318.1,27.8Q318.3,28.2 319.3,27.6L320.7,26.8L322.2,26.2Q323.3,25.7 323.2,25.4L323.0,25.0L322.9,24.6Q322.9,24.3 318.9,26.0L320.3,25.4L321.8,24.7Q317.8,26.6 317.8,27.0Z" fill="#868686"/>
<path d="M318.9,29.3L319.3,29.9L319.7,30.5Q320.1,31.0 321.2,30.3L322.5,29.4L323.9,28.7Q324.9,28.1 324.6,27.7L324.2,27.2L323.9,26.7Q323.6,26.3 319.7,28.3L321.1,27.5L322.5,26.8Q318.6,28.9 318.9,29.3Z" fill="#a0c81e"/>
<path d="M321.4,32.3L322.1,33.0L322.8,33.7Q323.4,34.3 324.3,33.5L325.6,32.5L326.8,31.6Q327.8,30.9 327.3,30.5L326.6,29.9L326.0,29.3Q325.6,28.8 321.9,31.1L323.2,30.2L324.5,29.4Q320.9,31.8 321.4,32.3Z" fill="#868686"/>
<path d="M325.2,35.8L326.1,36.5L327.0,37.2Q327.8,37.8 328.6,37.0L329.7,35.9L330.8,34.8Q331.6,34.1 330.9,33.6L330.1,32.9L329.3,32.3Q328.7,31.8 325.4,34.4L326.6,33.4L327.8,32.5Q324.5,35.2 325.2,35.8Z" fill="#868686"/>
<path d="M330.0,39.4L331.1,40.1L332.2,40.9Q333.0,41.4 333.7,40.5L334.6,39.3L335.5,38.1Q336.2,37.2 335.4,36.7L334.5,36.1L333.5,35.4Q332.8,34.9 329.9,37.9L331.0,36.8L332.0,35.7Q329.1,38.8 330.0,39.4Z" fill="#868686"/>
<path d="M335.5,42.9L336.7,43.6L337.8,44.3Q338.8,44.9 339.3,43.8L340.0,42.5L340.7,41.2Q341.2,40.2 340.4,39.7L339.3,39.1L338.3,38.5Q337.5,38.0 335.2,41.4L336.0,40.2L336.9,39.0Q334.6,42.4 335.5,42.9Z" fill="#868686"/>
<path d="M341.3,46.2L342.5,46.8L343.7,47.4Q344.6,47.8 345.0,46.7L345.5,45.3L345.9,43.9Q346.3,42.8 345.5,42.4L344.4,41.9L343.4,41.4Q342.6,40.9 340.9,44.6L341.5,43.3L342.1,42.0Q340.4,45.7 341.3,46.2Z" fill="#868686"/>
<path d="M347.0,48.9L348.2,49.4L349.3,49.9Q350.1,50.2 350.4,49.0L350.7,47.5L350.9,46.0Q351.1,44.8 350.3,44.5L349.4,44.2L348.4,43.7Q347.6,43.4 346.5,47.4L346.9,45.9L347.3,44.5Q346.1,48.5 347.0,48.9Z" fill="#868686"/>
<path d="M352.3,51.0L353.3,51.3L354.3,51.5Q355.0,51.7 355.1,50.5L355.3,48.9L355.3,47.4Q355.3,46.2 354.7,46.0L353.9,45.8L353.0,45.5Q352.3,45.3 351.8,49.5L352.0,48.0L352.2,46.4Q351.5,50.7 352.3,51.0Z" fill="#868686"/>
<path d="M356.8,52.1L357.6,52.3L358.3,52.3Q358.8,52.4 358.9,51.1L358.9,49.6L358.8,48.0Q358.7,46.7 358.2,46.7L357.6,46.6L356.9,46.5Q356.3,46.4 356.3,50.8L356.3,49.2L356.4,47.6Q356.1,52.0 356.8,52.1Z" fill="#868686"/>
<path d="M360.1,52.4L360.6,52.3L361.1,52.2Q361.4,52.1 361.4,50.9L361.3,49.3L361.1,47.7Q360.9,46.5 360.6,46.6L360.2,46.7L359.8,46.7Q359.4,46.8 359.7,51.2L359.7,49.6L359.5,48.0Q359.7,52.4 360.1,52.4Z" fill="#868686"/>
<path d="M362.1,51.7L362.3,51.4L362.5,51.1Q362.5,50.9 362.5,49.7L362.4,48.1L362.1,46.6Q361.9,45.4 361.8,45.7L361.7,45.9L361.5,46.1Q361.3,46.3 361.8,50.6L361.7,49.1L361.5,47.5Q361.9,51.9 362.1,51.7Z" fill="#868686"/>
<path d="M324.9,23.9L325.0,24.3L325.1,24.7Q325.3,25.0 326.5,24.6L328.0,24.2L329.5,23.9Q330.8,23.7 330.6,23.5L330.5,23.2L330.5,22.9Q330.5,22.7 326.1,23.4L327.7,23.1L329.2,22.8Q324.9,23.7 324.9,23.9Z" fill="#868686"/>
<path d="M325.8,25.9L326.1,26.4L326.5,26.8Q326.8,27.2 327.9,26.8L329.4,26.3L330.8,25.8Q332.0,25.5 331.7,25.2L331.4,24.8L331.2,24.4Q331.0,24.2 326.7,25.2L328.3,24.7L329.8,24.4Q325.6,25.5 325.8,25.9Z" fill="#868686"/>
<path d="M327.8,28.3L328.4,28.9L329.0,29.5Q329.5,29.9 330.5,29.3L331.8,28.7L333.1,28.1Q334.1,27.6 333.7,27.3L333.2,26.8L332.8,26.4Q332.5,26.0 328.5,27.4L329.9,26.9L331.3,26.4Q327.4,27.9 327.8,28.3Z" fill="#868686"/>
<path d="M330.9,31.1L331.6,31.7L332.4,32.3Q333.1,32.8 333.9,32.1L335.0,31.3L336.1,30.5Q336.9,29.9 336.4,29.5L335.8,29.1L335.2,28.6Q334.8,28.2 331.3,30.1L332.6,29.4L333.8,28.7Q330.4,30.7 330.9,31.1Z" fill="#868686"/>
<path d="M334.8,34.1L335.7,34.7L336.6,35.3Q337.3,35.8 338.0,34.9L338.8,33.9L339.7,33.0Q340.3,32.3 339.7,31.9L339.0,31.4L338.3,30.9Q337.8,30.6 335.0,32.9L336.0,32.0L337.0,31.2Q334.2,33.6 334.8,34.1Z" fill="#868686"/>
<path d="M339.3,37.0L340.3,37.6L341.2,38.1Q342.0,38.5 342.5,37.6L343.0,36.4L343.6,35.3Q344.0,34.5 343.4,34.1L342.6,33.7L341.9,33.2Q341.3,32.9 339.2,35.7L339.9,34.6L340.7,33.6Q338.6,36.5 339.3,37.0Z" fill="#868686"/>
<path d="M344.1,39.6L345.0,40.1L346.0,40.6Q346.8,41.0 347.0,39.9L347.3,38.6L347.6,37.3Q347.8,36.4 347.2,36.1L346.4,35.7L345.6,35.3Q345.0,35.0 343.7,38.3L344.2,37.1L344.7,35.9Q343.3,39.2 344.1,39.6Z" fill="#868686"/>
<path d="M348.8,41.9L349.7,42.3L350.6,42.6Q351.3,42.9 351.3,41.8L351.4,40.3L351.4,39.0Q351.3,37.9 350.8,37.7L350.1,37.4L349.3,37.1Q348.7,36.8 348.2,40.5L348.5,39.1L348.6,37.8Q348.0,41.6 348.8,41.9Z" fill="#868686"/>
<path d="M353.1,43.5L353.9,43.8L354.6,44.0Q355.2,44.2 355.1,43.0L354.9,41.5L354.7,40.0Q354.5,38.9 354.0,38.8L353.4,38.6L352.7,38.4Q352.2,38.2 352.4,42.2L352.4,40.7L352.3,39.3Q352.4,43.3 353.1,43.5Z" fill="#868686"/>
<path d="M356.7,44.5L357.3,44.6L357.9,44.7Q358.4,44.7 358.1,43.5L357.8,42.0L357.3,40.5Q356.9,39.3 356.6,39.3L356.1,39.2L355.6,39.1Q355.2,39.1 356.0,43.2L355.8,41.7L355.5,40.2Q356.2,44.4 356.7,44.5Z" fill="#868686"/>
<path d="M359.4,44.7L359.8,44.6L360.2,44.5Q360.5,44.4 360.1,43.3L359.7,41.7L359.1,40.3Q358.6,39.1 358.4,39.2L358.1,39.3L357.8,39.3Q357.5,39.3 358.8,43.5L358.4,42.0L357.9,40.5Q359.0,44.7 359.4,44.7Z" fill="#868686"/>
<path d="M361.0,44.1L361.2,43.9L361.3,43.7Q361.4,43.5 361.0,42.3L360.5,40.8L359.9,39.4Q359.3,38.3 359.3,38.5L359.2,38.7L359.0,38.9Q358.9,39.0 360.5,43.1L360.0,41.6L359.4,40.1Q360.8,44.3 361.0,44.1Z" fill="#868686"/>
<path d="M325.3,22.6L325.1,22.8L325.0,23.1Q325.0,23.3 326.2,23.0L327.7,22.7L329.3,22.5Q330.5,22.4 330.6,22.2L330.7,22.0L330.8,21.9Q330.9,21.8 326.7,22.2L328.2,22.0L329.7,21.8Q325.5,22.5 325.3,22.6Z" fill="#868686"/>
<path d="M332.6,22.8L332.6,23.0L332.7,23.3Q332.8,23.5 334.0,23.4L335.6,23.4L337.1,23.5Q338.4,23.6 338.3,23.5L338.2,23.3L338.2,23.1Q338.2,23.0 333.8,22.6L335.4,22.7L337.0,22.8Q332.6,22.6 332.6,22.8Z" fill="#868686"/>
<path d="M333.2,24.1L333.4,24.5L333.7,24.8Q333.9,25.1 335.0,24.9L336.5,24.8L337.9,24.7Q339.1,24.7 338.9,24.5L338.7,24.2L338.6,24.0Q338.5,23.9 334.2,23.8L335.8,23.8L337.3,23.8Q333.0,23.9 333.2,24.1Z" fill="#868686"/>
<path d="M334.6,25.9L335.0,26.3L335.4,26.7Q335.8,27.0 336.8,26.7L338.0,26.3L339.3,26.0Q340.3,25.9 340.1,25.7L339.8,25.4L339.5,25.2Q339.3,25.0 335.4,25.4L336.9,25.2L338.3,25.0Q334.3,25.6 334.6,25.9Z" fill="#868686"/>
<path d="M336.8,27.9L337.3,28.3L337.9,28.7Q338.3,29.0 339.1,28.6L340.1,28.0L341.2,27.5Q341.9,27.2 341.6,27.0L341.3,26.7L340.9,26.4Q340.7,26.2 337.4,27.2L338.6,26.8L339.8,26.4Q336.4,27.5 336.8,27.9Z" fill="#868686"/>
<path d="M339.6,29.9L340.2,30.4L340.8,30.8Q341.3,31.1 341.9,30.5L342.7,29.7L343.4,29.1Q343.9,28.6 343.6,28.4L343.1,28.1L342.7,27.8Q342.4,27.6 339.8,29.1L340.8,28.5L341.7,28.0Q339.1,29.6 339.6,29.9Z" fill="#868686"/>
<path d="M342.7,32.0L343.4,32.4L344.1,32.8Q344.6,33.1 345.0,32.3L345.4,31.4L345.8,30.5Q346.0,29.9 345.7,29.7L345.2,29.4L344.8,29.1Q344.5,28.9 342.7,31.0L343.4,30.2L344.0,29.5Q342.2,31.7 342.7,32.0Z" fill="#868686"/>
<path d="M346.1,33.9L346.8,34.2L347.4,34.5Q348.0,34.8 348.1,33.9L348.2,32.8L348.2,31.8Q348.2,31.0 347.9,30.8L347.4,30.6L347.0,30.4Q346.6,30.2 345.8,32.8L346.1,31.8L346.4,30.9Q345.5,33.6 346.1,33.9Z" fill="#868686"/>
<path d="M349.4,35.4L350.0,35.7L350.7,36.0Q351.2,36.2 351.0,35.2L350.8,33.9L350.5,32.7Q350.3,31.9 350.0,31.7L349.6,31.6L349.1,31.4Q348.8,31.2 348.9,34.3L348.9,33.1L348.9,32.1Q348.9,35.2 349.4,35.4Z" fill="#868686"/>
<path d="M352.4,36.6L353.0,36.8L353.5,36.9Q354.0,37.0 353.6,36.0L353.1,34.7L352.6,33.4Q352.1,32.4 351.9,32.4L351.5,32.3L351.1,32.1Q350.8,32.0 351.8,35.4L351.5,34.2L351.1,33.0Q352.0,36.4 352.4,36.6Z" fill="#868686"/>
<path d="M355.0,37.3L355.4,37.3L355.9,37.4Q356.2,37.4 355.7,36.3L355.0,35.0L354.2,33.7Q353.6,32.7 353.4,32.7L353.1,32.6L352.8,32.6Q352.6,32.5 354.2,36.1L353.7,34.8L353.1,33.5Q354.6,37.2 355.0,37.3Z" fill="#868686"/>
<path d="M356.9,37.4L357.2,37.4L357.5,37.3Q357.7,37.3 357.0,36.2L356.2,34.8L355.3,33.5Q354.5,32.6 354.4,32.6L354.2,32.6L354.0,32.7Q353.9,32.7 356.1,36.3L355.4,35.0L354.6,33.7Q356.7,37.4 356.9,37.4Z" fill="#868686"/>
<path d="M358.0,37.0L358.2,36.9L358.3,36.7Q358.3,36.6 357.6,35.5L356.7,34.3L355.8,33.0Q355.0,32.1 354.9,32.2L354.9,32.3L354.8,32.4Q354.7,32.5 357.3,36.0L356.4,34.7L355.5,33.4Q357.9,37.1 358.0,37.0Z" fill="#868686"/>
<path d="M358.3,36.1L358.3,35.8L358.2,35.6Q358.1,35.4 357.4,34.4L356.6,33.3L355.6,32.2Q354.8,31.3 354.9,31.5L354.9,31.7L355.0,31.8Q355.0,31.9 357.7,35.3L356.8,34.0L355.8,32.8Q358.3,36.3 358.3,36.1Z" fill="#868686"/>
<path d="M334.0,21.5L333.7,21.5L333.4,21.6Q333.2,21.6 334.4,21.7L335.9,21.9L337.5,22.1Q338.6,22.4 338.8,22.3L338.9,22.3L339.1,22.3Q339.3,22.3 335.4,21.5L336.8,21.7L338.2,22.0Q334.2,21.4 334.0,21.5Z" fill="#868686"/>
<path d="M332.9,21.9L332.7,22.0L332.6,22.2Q332.6,22.3 333.8,22.3L335.4,22.5L337.0,22.6Q338.2,22.8 338.2,22.8L338.3,22.6L338.4,22.5Q338.5,22.5 334.2,21.8L335.7,22.0L337.3,22.2Q333.0,21.8 332.9,21.9Z" fill="#868686"/>
</svg>
<div id="logo-int" class="abs">INTERNATIONAL</div>
<div id="logo-bs" class="abs">Business School</div>
</div>

<div id="nav" class="abs">
<div id="act" class="abs"></div>
<div class="ni fit f1" style="left:313px">Página principal</div>
<div class="ni fit f2" style="left:466px">Mis cursos</div>
<div class="ni fit f3" style="left:580px">Mi agenda</div>
<div class="ni fit f4" style="left:693px">Informes</div>
<div class="ni fit f5" style="left:795px">Red social</div>
<div class="ni fit f6" style="left:904px">Panel de control</div>
<div class="ni fit f7" style="left:1060px">Administración</div>
<div class="ni fit f8" style="left:1207px">Buy Courses</div>
</div>
<div id="badge" class="abs">125</div>
<div id="avatar" class="abs">
<svg width="41" height="41" viewBox="0 0 41 41">
<g transform="rotate(-33 17.5 20)" fill="none">
<ellipse cx="17.5" cy="20" rx="17" ry="7.2" stroke="#7d9fc6" stroke-width="2.6"/>
<ellipse cx="18.5" cy="20.3" rx="14" ry="5" stroke="#f2b679" stroke-width="1.8"/>
<ellipse cx="19.5" cy="20.6" rx="11.5" ry="3.2" stroke="#5f8fc4" stroke-width="1.8"/>
</g>
<rect x="22" y="16" width="18" height="11" fill="#fff" fill-opacity=".8"/>
<text x="22.500" y="24.800" font-size="10.500" font-weight="bold" fill="#2b7f99" textLength="16" lengthAdjust="spacingAndGlyphs">Ns</text>
</svg>
</div>
<div id="caret" class="abs"></div>

<div id="bc" class="abs">
<svg class="abs" style="left:16px;top:10px" width="20" height="20" viewBox="0 0 20 20">
<rect x="1" y="15" width="18" height="3" rx="1" fill="#5aa05a"/>
<path d="M4,9 L4,17 L16,17 L16,9 L10,4 Z" fill="#f3ead6" stroke="#b9a98a" stroke-width=".6"/>
<path d="M1.2,10 L10,2 L18.8,10 L17.2,11.4 L10,5 L2.8,11.4 Z" fill="#d08a3c" stroke="#a66a2a" stroke-width=".5"/>
<rect x="8.3" y="11" width="3.4" height="6" fill="#8a6a4a"/>
<rect x="5.2" y="11" width="2" height="2.4" fill="#7fb2d9"/><rect x="12.8" y="11" width="2" height="2.4" fill="#7fb2d9"/>
</svg>
<span class="fit f9" style="left:41px;color:#646464">Curso de ejemplo nsr</span>
<span style="left:206px;color:#ccc">/</span>
<span class="fit f10" style="left:221px;color:#777">Informes</span>
</div>
<div id="vbtn" class="abs">
<svg class="abs" style="left:12px;top:10px" width="15" height="12" viewBox="0 0 15 12"><path d="M.3,6 C2.5,2 5,.8 7.5,.8 C10,.8 12.5,2 14.7,6 C12.5,10 10,11.2 7.5,11.2 C5,11.2 2.5,10 .3,6 Z M7.5,2.2 A3.8,3.8 0 1 0 7.5,9.8 A3.8,3.8 0 1 0 7.5,2.2 Z" fill="#333" fill-rule="evenodd"/><circle cx="7.5" cy="6" r="2.3" fill="#333"/><circle cx="6.6" cy="5" r=".9" fill="#fff"/></svg>
<span class="abs fit f11" style="left:29px;top:0">Cambiar a "Vista de estudiante"</span>
</div>

<div id="tb" class="abs"></div>
<div class="ib" style="left:310px">
<svg width="44" height="44" viewBox="0 0 44 44">
<defs><radialGradient id="gu" cx=".42" cy=".28" r=".85"><stop offset="0" stop-color="#ffffff"/><stop offset=".55" stop-color="#d4d4d4"/><stop offset="1" stop-color="#8a8a8a"/></radialGradient>
<linearGradient id="gus" x1="0" x2="0" y1="0" y2="1"><stop offset="0" stop-color="#9a9a9a"/><stop offset="1" stop-color="#3f3f3f"/></linearGradient></defs>
<path d="M8.3,33.500 C8.3,25.500 13,21.500 18,21.500 L27,21.500 C32,21.500 36.700,25.500 36.700,33.500 C36.700,37.800 30,39.600 22.500,39.600 C15,39.600 8.300,37.800 8.300,33.500 Z" fill="url(#gu)" stroke="url(#gus)" stroke-width="1.3"/>
<circle cx="22.500" cy="14.200" r="9.600" fill="url(#gu)" stroke="#8c8c8c" stroke-width="1.100"/>
</svg></div>
<div class="ib" style="left:368px">
<svg width="44" height="44" viewBox="0 0 44 44">
<defs><radialGradient id="gg" cx=".4" cy=".3" r=".8"><stop offset="0" stop-color="#d6f5bf"/><stop offset="1" stop-color="#4fae34"/></radialGradient>
<radialGradient id="gb" cx=".4" cy=".3" r=".8"><stop offset="0" stop-color="#e3f1ff"/><stop offset="1" stop-color="#3f86dc"/></radialGradient>
<radialGradient id="gs1" cx=".4" cy=".3" r=".8"><stop offset="0" stop-color="#fff4dd"/><stop offset="1" stop-color="#f0b070"/></radialGradient>
<radialGradient id="gs2" cx=".4" cy=".3" r=".8"><stop offset="0" stop-color="#fff0ee"/><stop offset="1" stop-color="#f0a8a0"/></radialGradient></defs>
<path d="M4.300,28.500 C4.300,22.500 7.500,19 11.500,19 L16,19 C20,19 22.500,22 22.500,28.500 C22.500,32 18,33.400 13.400,33.400 C8.800,33.400 4.300,32 4.300,28.500 Z" fill="url(#gg)" stroke="#3d8a2c" stroke-width=".9"/>
<path d="M12.500,20.500 L15.300,24.500 L18.100,20.500 Z" fill="#e0452f"/>
<circle cx="15.300" cy="13.100" r="7.700" fill="url(#gs1)" stroke="#d39a5c" stroke-width=".9"/>
<path d="M16.700,33.800 C16.700,27.500 20.500,24 25,24 L31,24 C35.500,24 39.300,27.500 39.300,33.800 C39.300,37.600 33.500,39 28,39 C22.500,39 16.700,37.600 16.700,33.800 Z" fill="url(#gb)" stroke="#2f6fc0" stroke-width=".9"/>
<circle cx="27.700" cy="18.800" r="7.700" fill="url(#gs2)" stroke="#dd8f86" stroke-width=".9"/>
</svg></div>
<div class="ib" style="left:425px">
<svg width="44" height="44" viewBox="0 0 44 44">
<defs><linearGradient id="gbd" x1="0" x2="1" y1="0" y2="1"><stop offset="0" stop-color="#1f8a35"/><stop offset="1" stop-color="#0b4a17"/></linearGradient></defs>
<path d="M14.500,29 L10.500,37.500 L13.500,37.500 L18,29 Z M29.500,29 L33.500,37.500 L30.500,37.500 L26,29 Z" fill="#c9772b" stroke="#8a4a12" stroke-width=".6"/>
<rect x="13.500" y="31.300" width="17" height="1.800" fill="#c9772b" stroke="#8a4a12" stroke-width=".4"/>
<rect x="8" y="26" width="30.500" height="3.300" rx="1" fill="#d58a3a" stroke="#8a4a12" stroke-width=".6"/>
<rect x="10" y="6" width="26.500" height="20" rx="1" fill="url(#gbd)" stroke="#0a3a12" stroke-width="1"/>
<text x="13.500" y="15.500" font-size="8" fill="#a8e6ae">a</text><text x="20.500" y="15" font-size="9" fill="#a8e6ae">b</text><text x="28" y="17.500" font-size="9" fill="#a8e6ae">c</text>
<path d="M5.500,22 L16.500,16.600 L17.500,18.700 L6.500,24.100 Z" fill="#f6f6f6" stroke="#a5a5a5" stroke-width=".5"/>
</svg></div>
<div class="ib" style="left:482px">
<svg width="44" height="44" viewBox="0 1 44 44">
<g stroke-width=".5">
<path d="M6,14 L13.5,10 L21,14 L13.5,18 Z" fill="#ff8a80" stroke="#b71c1c"/><path d="M6,14 L13.5,18 L13.5,27 L6,22.5 Z" fill="#e53935" stroke="#b71c1c"/><path d="M21,14 L13.5,18 L13.5,27 L21,22.5 Z" fill="#c62828" stroke="#b71c1c"/>
<path d="M22,14 L29.5,10 L37,14 L29.5,18 Z" fill="#ffd180" stroke="#e65100"/><path d="M22,14 L29.5,18 L29.5,27 L22,22.5 Z" fill="#ffa726" stroke="#e65100"/><path d="M37,14 L29.5,18 L29.5,27 L37,22.5 Z" fill="#f57c00" stroke="#e65100"/>
<path d="M14,22 L21.5,18 L29,22 L21.5,26 Z" fill="#b9f6a0" stroke="#2e7d32"/><path d="M14,22 L21.5,26 L21.5,35.5 L14,31 Z" fill="#5cc746" stroke="#2e7d32"/><path d="M29,22 L21.5,26 L21.5,35.5 L29,31 Z" fill="#3a9d2b" stroke="#2e7d32"/>
</g></svg></div>
<div class="ib" style="left:540px">
<svg width="44" height="44" viewBox="0 0 44 44">
<g transform="rotate(-14 21 23)">
<rect x="7" y="9" width="25" height="29" rx="2" fill="#e9a64a" stroke="#a8641c" stroke-width="1"/>
<rect x="9.5" y="12" width="20" height="23.5" fill="#e4ecf7" stroke="#8ea3c4" stroke-width=".6"/>
<path d="M11.5,17h16M11.5,20h16M11.5,23h16M11.5,26h16M11.5,29h16M11.5,32h16" stroke="#9fb4d6" stroke-width=".8"/>
<rect x="14.5" y="6.5" width="10" height="5.5" rx="2" fill="#5cc746" stroke="#2e7d32" stroke-width=".7"/>
</g>
<path d="M20,20 L25,26 L38,9.5 L34.5,8 L25,20.5 L22.5,17.5 Z" fill="#4caf50" stroke="#1b7a24" stroke-width=".8"/>
</svg></div>
<div class="ib" style="left:597px">
<svg width="44" height="44" viewBox="0 0 44 44">
<defs><radialGradient id="gh" cx=".5" cy=".25" r=".8"><stop offset="0" stop-color="#5fa2f0"/><stop offset=".6" stop-color="#2a66c4"/><stop offset="1" stop-color="#153f8f"/></radialGradient>
<linearGradient id="gv" x1="0" x2="0" y1="0" y2="1"><stop offset="0" stop-color="#e6e6e6"/><stop offset="1" stop-color="#8f8f8f"/></linearGradient></defs>
<path d="M10,29.500 C13,36 31,36 34,29.500 C33.500,34.500 28.500,36.800 22,36.800 C15.500,36.800 10.500,34.500 10,29.500 Z" fill="url(#gv)" stroke="#7a7a7a" stroke-width=".6"/>
<path d="M22.500,7.500 C24,7.500 36,15 38.300,23 C39,26 36,28.500 33.500,30 C30,33 15,33 11.500,30 C9,28.500 3.500,26.500 4,23 C5.500,15.500 21,7.500 22.500,7.500 Z" fill="url(#gh)" stroke="#153f8f" stroke-width=".8"/>
<path d="M16.500,18 C18.500,18 19.500,16.800 20.800,16.800 L23.200,16.800 C24.500,16.800 25.500,18 27.500,18 L26.800,24 C26.500,25.500 24,26.500 22,26.500 C20,26.500 17.500,25.500 17.200,24 Z" fill="#ffcc2e" stroke="#d99a00" stroke-width=".7"/>
</svg></div>
<div id="sin" class="abs"></div>
<div id="sbtn" class="abs">
<svg class="abs" style="left:7px;top:10px" width="16" height="16" viewBox="0 0 16 16"><circle cx="6.6" cy="6.6" r="4.9" fill="none" stroke="#222" stroke-width="2.1"/><path d="M10.3,10.3 L14.6,14.6" stroke="#222" stroke-width="2.6" stroke-linecap="round"/></svg>
<span class="abs fit f12" style="left:26px;top:0">Buscar usuarios</span>
</div>
<div class="ib" style="left:1484px">
<svg width="44" height="44" viewBox="0 0 44 44">
<defs><linearGradient id="gp" x1="0" x2="0" y1="0" y2="1"><stop offset="0" stop-color="#fbfcfd"/><stop offset=".5" stop-color="#d9dde4"/><stop offset="1" stop-color="#9aa1ae"/></linearGradient>
<linearGradient id="gpb" x1="0" x2="0" y1="0" y2="1"><stop offset="0" stop-color="#a6d6ff"/><stop offset=".5" stop-color="#3b9cff"/><stop offset="1" stop-color="#1e7be0"/></linearGradient>
<linearGradient id="gpp" x1="0" x2="0" y1="0" y2="1"><stop offset="0" stop-color="#ffffff"/><stop offset="1" stop-color="#e3e6ec"/></linearGradient></defs>
<path d="M15,4.500 L31,4.500 L31.500,20 L14.500,20 Z" fill="url(#gpp)" stroke="#9ba3b1" stroke-width=".8"/>
<path d="M4.500,24 C4.500,17.500 8,15.500 12,15.500 L33,15.500 C37,15.500 40.500,17.500 40.500,24 L40.500,28.500 C40.500,32.500 38,34.500 34,34.500 L11,34.500 C7,34.500 4.500,32.500 4.500,28.500 Z" fill="url(#gp)" stroke="#7e8797" stroke-width=".9"/>
<path d="M13,20 L32,20 L33,26.500 L12,26.500 Z" fill="url(#gpb)" stroke="#2b6fc0" stroke-width=".5"/>
<path d="M10,28.500 L35,28.500 L36.500,37 L8.500,37 Z" fill="#5d6470"/>
<path d="M12,29.500 L33,29.500 L35.500,39 L9.500,39 Z" fill="url(#gpp)" stroke="#8a92a0" stroke-width=".7"/>
<circle cx="36.500" cy="20.500" r="1" fill="#b9bec8"/>
</svg></div>
<div class="ib" style="left:1546px">
<svg width="44" height="44" viewBox="0 0 44 44">
<defs><linearGradient id="gf" x1="0" x2="1" y1="0" y2="1"><stop offset="0" stop-color="#fafafa"/><stop offset="1" stop-color="#c4c4c4"/></linearGradient>
<linearGradient id="ga" x1="0" x2="0" y1="0" y2="1"><stop offset="0" stop-color="#7be34f"/><stop offset="1" stop-color="#1f9d1a"/></linearGradient></defs>
<path d="M9.500,4.500 L30,4.500 L37.500,12 L37.500,39 L9.500,39 Z" fill="url(#gf)" stroke="#b5b5b5" stroke-width=".8"/>
<path d="M30,4.500 L30,12 L37.500,12 Z" fill="#ececec" stroke="#b5b5b5" stroke-width=".7"/>
<text x="12.500" y="26.500" font-size="11.500" font-weight="bold" fill="#17524e" transform="rotate(-5 23 22)" style="letter-spacing:-.3px">CSV</text>
<path d="M9.500,24.500 L17.500,24.500 L17.500,30.500 L22,30.500 L13.500,39.500 L4.800,30.500 L9.500,30.500 Z" fill="url(#ga)" stroke="#1e8a1a" stroke-width=".8"/>
</svg></div>

<div class="card" style="left:298px;background:#755993">
<svg style="left:9px;top:30px" width="53" height="35" viewBox="0 0 53 35"><path d="M26.5,0.5 L52.5,9.5 L26.5,18.5 L8,12.2 L8,22 L9.8,34.5 L3.2,34.5 L5,22 L5,11.2 L0.5,9.5 Z" fill="#fff"/><path d="M12,15.5 L26.5,20.6 L41,15.5 L41,23.5 C41,27 34.5,29.3 26.5,29.3 C18.5,29.3 12,27 12,23.5 Z" fill="#fff"/><circle cx="6.5" cy="22" r="2.3" fill="#fff"/></svg>
<div class="t fit f13">Número de usuarios</div><div class="v fit f14">3</div></div>
<div class="card" style="left:633px;background:#4299b2">
<svg style="left:17px;top:30px" width="38" height="36" viewBox="0 0 38 36"><path d="M9.5,0 L34,0 C36.5,0 38,1.8 37.4,4.3 L31.8,26.3 C31.3,28.2 29.8,29.3 27.8,29.3 L6.2,29.3 C4.6,29.3 3.8,30.3 4.3,31.3 C4.7,32 5.3,32.2 6.2,32.2 L29.5,32.2 C31,32.2 32.2,31.3 32.6,29.9 L33.5,27 L35.6,28 L34.8,31 C34.1,33.8 32,35.6 29.2,35.6 L5.6,35.6 C2,35.6 -.4,32.8 .3,29.3 L5.4,3.6 C5.9,1.3 7.4,0 9.5,0 Z M12.3,6.2 L11.7,8.6 L28.7,8.6 L29.3,6.2 Z M11.2,11.2 L10.6,13.6 L27.6,13.6 L28.2,11.2 Z" fill="#fff" fill-rule="evenodd"/></svg>
<div class="t fit f15">Progreso en la lección</div><div class="v fit f16">0/3</div></div>
<div class="card" style="left:968px;background:#ae4644">
<svg style="left:15px;top:30px" width="42" height="36" viewBox="0 0 42 36"><path d="M21,35.5 C20.4,35.5 19.9,35.2 19.4,34.8 L5.5,21.5 L13.5,21.5 C14.2,21.5 14.8,21.1 15,20.4 L16.7,15.2 L21,28.5 C21.2,29.2 21.8,29.6 22.5,29.6 C23.2,29.6 23.8,29.1 24,28.4 L27,18.5 L28,20.7 C28.3,21.2 28.8,21.5 29.4,21.5 L36.5,21.5 L22.6,34.8 C22.1,35.2 21.6,35.5 21,35.5 Z M2.6,18.4 C.9,16.3 0,13.8 0,11.2 C0,4.5 4.3,.5 10.8,.5 C14.8,.5 18.4,3.4 21,6 C23.6,3.4 27.2,.5 31.2,.5 C37.7,.5 42,4.5 42,11.2 C42,13.8 41.1,16.3 39.4,18.4 L30.4,18.4 L28.2,13.9 C27.9,13.3 27.3,13 26.7,13.1 C26,13.1 25.5,13.6 25.3,14.2 L22.6,23 L18.3,9.7 C18.1,9 17.5,8.6 16.8,8.6 C16.1,8.6 15.5,9 15.3,9.7 L12.4,18.4 Z" fill="#fff"/></svg>
<div class="t fit f17">Media del ejercicio</div><div class="v fit f18">8%</div></div>
<div class="card" style="left:1303px;background:#e0843a">
<svg style="left:13px;top:30px" width="46" height="36" viewBox="0 0 46 36"><path d="M3.6,0 L42.4,0 C44.4,0 46,1.6 46,3.6 L46,32.4 C46,34.4 44.4,36 42.4,36 L3.6,36 C1.6,36 0,34.4 0,32.4 L0,3.6 C0,1.6 1.6,0 3.6,0 Z M3.3,6.5 L3.3,32 C3.3,32.4 3.6,32.7 4,32.7 L42,32.7 C42.4,32.7 42.7,32.4 42.7,32 L42.7,6.5 Z" fill="#fff" fill-rule="evenodd"/><path d="M7,27.5 C7,22 8.5,19.5 11,19.3 C12,20.2 13,20.6 14.2,20.6 C15.4,20.6 16.4,20.2 17.4,19.3 C19.9,19.5 21.4,22 21.4,27.5 C21.4,28.5 20.7,29.3 19.7,29.3 L8.7,29.3 C7.7,29.3 7,28.5 7,27.5 Z" fill="#fff"/><circle cx="14.2" cy="15" r="4.6" fill="#fff"/><rect x="24.5" y="11.5" width="15" height="3" fill="#fff"/><rect x="24.5" y="17.5" width="9" height="3" fill="#fff"/><rect x="35" y="17.5" width="4.5" height="3" fill="#fff"/><rect x="24.5" y="23.5" width="15" height="3" fill="#fff"/></svg>
<div class="t fit f19">Número de certificados</div><div class="v fit f20">1/3</div></div>

<div class="pan" style="left:298px;top:466px;width:412px;height:276px">
<div class="pt fit f21">Distribución porcentual de notas</div>
<svg width="410" height="274" viewBox="299 467 410 274">
<g stroke="#ececec" stroke-width="1" fill="none">
<path d="M358,543.5H692.5M358,615.5H692.5"/>
<path d="M400.5,543V698M433,543V698M465.5,543V698M498,543V698M530.5,543V698M563,543V698M595.5,543V698M628,543V698M660.5,543V698"/>
</g>
<path d="M368.3,543V688" stroke="#e0e0e0" stroke-width="1"/>
<rect x="372.3" y="543" width="23" height="145" fill="#ae4644"/>
<rect x="438" y="615.5" width="23" height="72.5" fill="#ffe88c"/>
<path d="M358,688.5H692.5" stroke="#a3a3a3" stroke-width="1"/>
<g font-size="13.8" fill="#666" text-anchor="end"><text x="356" y="547.5">2</text><text x="356" y="620">1</text><text x="356" y="692.5">0</text></g>
<text x="530" y="716" font-size="13.8" fill="#666" text-anchor="middle">Distribución porcentual de notas</text>
<text transform="translate(332.5,615.5) rotate(-90)" font-size="13.8" fill="#666" text-anchor="middle">Número de usuarios</text>
</svg>
</div>
<div class="pan" style="left:745px;top:466px;width:412px;height:331px">
<div class="pt fit f22">Estudiantes destacados</div>
<svg style="left:24px;top:76px" width="46" height="50" viewBox="0 0 46 50">
<defs><radialGradient id="go" cx=".4" cy=".25" r=".85"><stop offset="0" stop-color="#b9e25a"/><stop offset=".55" stop-color="#74b52b"/><stop offset="1" stop-color="#3d7d14"/></radialGradient></defs>
<path d="M15,28 C15,35 10.500,37.500 5,37.800 C2,38 2.500,43.300 6.500,43.300 C11.500,43.300 15.500,41.500 17.300,38 C17.300,42 17.800,46 20.200,46 C22,46 22.300,43.500 22.300,41.500 C22.300,43.500 22.600,46 24.400,46 C26.800,46 27.300,42 27.300,38 C29.100,41.500 33.100,43.300 38.100,43.300 C42.100,43.300 42.600,38 39.600,37.800 C34.100,37.500 29.600,35 29.600,28 Z" fill="url(#go)" stroke="#3d7d14" stroke-width=".6"/>
<circle cx="22.300" cy="18.400" r="14.500" fill="url(#go)" stroke="#3d7d14" stroke-width=".6"/>
<ellipse cx="16.500" cy="20.800" rx="1.300" ry="2.200" fill="#ffb14a" stroke="#b5351a" stroke-width=".9"/><ellipse cx="21.300" cy="20.800" rx="1.300" ry="2.200" fill="#ffb14a" stroke="#b5351a" stroke-width=".9"/>
</svg>
<svg style="left:22px;top:142px" width="48" height="42" viewBox="0 0 48 42">
<g transform="rotate(-35 22 21)" fill="none">
<ellipse cx="22" cy="21" rx="24" ry="10" stroke="#7a9ec4" stroke-width="3.600"/>
<ellipse cx="23.500" cy="21.500" rx="20" ry="7" stroke="#f0b27a" stroke-width="2.600"/>
<ellipse cx="25" cy="22" rx="16.500" ry="4.500" stroke="#5d8fc2" stroke-width="2.600"/>
</g>
<rect x="30" y="13" width="18" height="20" fill="#fff" fill-opacity=".85"/>
<text x="31" y="29" font-size="17" font-weight="bold" fill="#1f6c8c">N</text><text x="43.500" y="29" font-size="17" font-weight="bold" fill="#1f6c8c">c</text>
<text x="37" y="36" font-size="5" fill="#c9b9a0">P</text>
</svg>
<svg style="left:28px;top:204px" width="34" height="48" viewBox="0 0 34 48">
<defs><linearGradient id="gbn" x1="0" x2="1" y1="0" y2="0"><stop offset="0" stop-color="#8d9299"/><stop offset=".4" stop-color="#f1f3f5"/><stop offset="1" stop-color="#8d9299"/></linearGradient></defs>
<rect x="15.7" y="1" width="2.6" height="10" rx="1.2" fill="url(#gbn)" stroke="#6d7278" stroke-width=".5"/>
<path d="M6,44 L11,36 L23,36 L28,44 C22,47 12,47 6,44 Z" fill="url(#gbn)" stroke="#6d7278" stroke-width=".6"/>
<path d="M7,22 C7,13 11,9 17,9 C23,9 27,13 27,22 L27,33 C27,37 23,38.5 17,38.5 C11,38.5 7,37 7,33 Z" fill="url(#gbn)" stroke="#6d7278" stroke-width=".7"/>
<rect x="4.5" y="17.5" width="25" height="9.5" rx="4.7" fill="#17191c"/>
<circle cx="12" cy="22.2" r="3.3" fill="#fdfdf0"/><circle cx="22" cy="22.2" r="3.3" fill="#fdfdf0"/><circle cx="12.5" cy="22.4" r="1.1" fill="#111"/><circle cx="21.5" cy="22.4" r="1.1" fill="#111"/>
<rect x="9" y="29.5" width="16" height="6" rx="2.6" fill="#fafafa" stroke="#333" stroke-width=".7"/><path d="M9,32.5h16M13,29.5v6M17,29.5v6M21,29.5v6" stroke="#333" stroke-width=".5"/>
</svg>
<div class="sn fit f23" style="top:73px">Carmichel, Chuck</div>
<div class="pb" style="top:98px"><div class="pbf">27%</div></div>
<div class="sn fit f24" style="top:136px">pruebas, Profesor demo</div>
<div class="pb" style="top:161px"></div>
<div class="sn fit f25" style="top:199px">Angel, Jose</div>
<div class="pb" style="top:224px"></div>
<div id="note"><span class="fit f26">Nota: Este progreso es obtenido a través de una combinación del</span><br><span class="fit f27">progreso en las lecciones y de las notas promedias en los ejercicios</span></div>
</div>
<div class="pan" style="left:1192px;top:466px;width:412px;height:276px">
<div class="pt fit f28">Tiempo total permanecido en el curso</div>
<svg width="410" height="274" viewBox="1193 467 410 274">
<g stroke="#ececec" stroke-width="1" fill="none">
<path d="M1267,543.5H1586M1267,591.5H1586M1267,639.5H1586"/>
<path d="M1277.5,543V699M1432.5,543V699"/>
</g>
<path d="M1267,688.5H1586" stroke="#a3a3a3" stroke-width="1"/>
<clipPath id="lc"><rect x="1270" y="540" width="316" height="160"/></clipPath>
<g clip-path="url(#lc)">
<path d="M1277.3,687.4 C1339.4,680.8 1374.9,687.8 1432.5,670.8 C1498.3,647.8 1524.5,616.1 1585.9,579.7" fill="none" stroke="#4caf65" stroke-width="1.4"/>
<circle cx="1277.3" cy="687.4" r="4" fill="#3aa655"/><circle cx="1432.5" cy="670.8" r="4" fill="#3aa655"/><circle cx="1585.9" cy="579.7" r="4" fill="#3aa655"/>
</g>
<g font-size="13.8" fill="#666" text-anchor="end"><text x="1265.5" y="547.5">300</text><text x="1265.5" y="595.5">200</text><text x="1265.5" y="644">100</text><text x="1265.5" y="692.5">0</text></g>
<text x="1432" y="716" font-size="13.8" fill="#666" text-anchor="middle">Estudiantes</text>
<text transform="translate(1226.5,615.5) rotate(-90)" font-size="13.8" fill="#666" text-anchor="middle">Minutos</text>
</svg>
</div>

<div id="bp" class="abs">
<div id="bph">
<svg class="abs" style="left:18px;top:12px" width="24" height="26" viewBox="0 0 24 26">
<path d="M6,17 L3,24 L5.4,24 L8.5,18 Z M18,17 L21,24 L18.600,24 L15.500,18 Z" fill="#b5651d" stroke="#7a3f0f" stroke-width=".5"/>
<rect x="2.5" y="15.500" width="19" height="2.600" rx=".8" fill="#c9772b" stroke="#7a3f0f" stroke-width=".5"/>
<rect x="3.500" y="2.500" width="17.500" height="13.500" rx="1" fill="#2a7f38" stroke="#0f3f17" stroke-width=".9"/>
<text x="6" y="9.500" font-size="5.500" font-weight="bold" fill="#e6f5e0">a b c</text>
<path d="M1,12.500 L7,10 L7.600,11.400 L1.600,14 Z" fill="#f2f2f2" stroke="#9a9a9a" stroke-width=".4"/>
</svg>
<div class="abs fit f29" style="left:47px;top:10px;font-size:18px;line-height:26px;color:#3a3a3a;white-space:nowrap;letter-spacing:.6px">Curso de ejemplo nsr</div>
</div>
<div class="abs fit f30" style="left:18px;top:109px;font-size:21px;line-height:30px;color:#333;white-space:nowrap">Profesores</div>
<div class="abs" style="left:17px;top:145px;width:1270px;height:1px;background:#e7e7e7"></div>
<div class="abs" style="left:45px;top:180px;width:7px;height:7px;border-radius:50%;background:#333"></div>
<svg class="abs" style="left:63px;top:174px" width="18" height="20" viewBox="0 0 18 20">
<path d="M2,18 C1.500,12.500 4,11 6.500,10.500 L11.500,10.500 C14,11 16.500,12.500 16,18 C13,19.600 5,19.600 2,18 Z" fill="#7fb1ec" stroke="#3b76c4" stroke-width=".7"/>
<path d="M8.200,11 L9.800,11 L10.400,16.500 L9,18 L7.600,16.500 Z" fill="#d93025"/>
<path d="M6.500,10.500 L9,12.500 L11.500,10.500 L10.500,9.500 L7.500,9.500 Z" fill="#fff"/>
<ellipse cx="9" cy="5.800" rx="4.300" ry="4.800" fill="#f6c48a" stroke="#c98c54" stroke-width=".7"/>
</svg>
<div class="abs fit f31" style="left:85px;top:171px;font-size:16px;line-height:22px;color:#666;white-space:nowrap">SL, Nosolored</div>
</div>

<div id="wm" class="abs">ayudaweb.es</div>
</body>
</html>
